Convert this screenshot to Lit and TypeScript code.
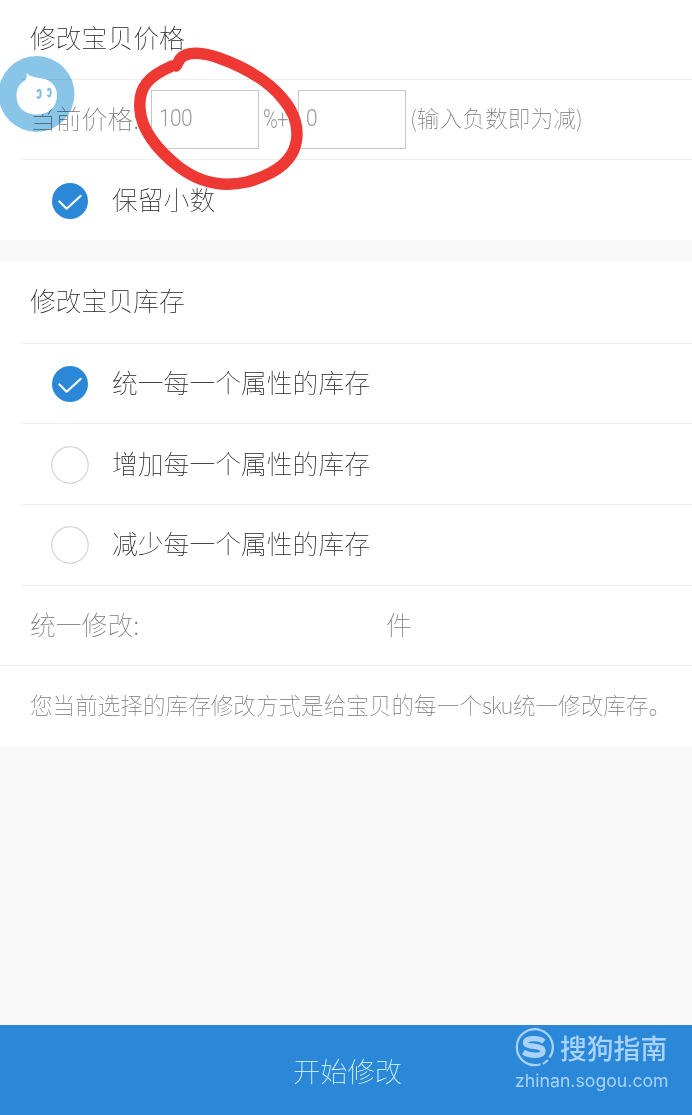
import { LitElement, html, css, svg } from "lit";
import { customElement, property } from "lit/decorators.js";
import { classMap } from "lit/directives/class-map.js";

@customElement("check-dot")
class CheckDot extends LitElement {
  @property({ type: Boolean }) checked = false;
  static styles = css`
    :host { display: block; width: 38px; height: 38px; }
    svg { display: block; }
  `;
  render() {
    return html`<svg width="38" height="38" viewBox="0 0 38 38" fill="none">
      ${this.checked
        ? svg`<circle cx="19" cy="19" r="18" fill="#2b88d8"/><path d="M8.4 19.5L15.6 26.7L29.6 14" stroke="#fff" stroke-width="2.2" stroke-linecap="round" stroke-linejoin="round"/>`
        : svg`<circle cx="19" cy="19" r="18.2" fill="#fff" stroke="#cfcfcf" stroke-width="1.1"/>`}
    </svg>`;
  }
}

@customElement("app-root")
class AppRoot extends LitElement {
  static styles = css`
    :host {
      display: block;
      font-family: "Noto Sans CJK SC", sans-serif;
      font-weight: 100;
    }
    .page {
      position: relative;
      display: flex;
      flex-direction: column;
      box-sizing: border-box;
      height: 1115px;
      overflow: hidden;
      background: #f8f8f8;
      color: #222;
      font-size: 25.8px;
      line-height: 36px;
      white-space: nowrap;
    }
    .card { background: #fff; }
    .stock { margin-top: 22px; }
    .row {
      box-sizing: border-box;
      display: flex;
      align-items: center;
      height: 80.6px;
      margin-left: 22px;
      padding-left: 8px;
      border-bottom: 1px solid #eee;
    }
    .price .row { height: 80px; }
    .row.title { padding-bottom: 5px; }
    .stock .row.title { height: 81.8px; padding-bottom: 5px; }
    .row.last { border-bottom-color: transparent; }
    .row.full { margin-left: 0; padding-left: 30px; }
    .option { padding: 1px 0 0 29px; gap: 23px; }
    .price .option { padding-top: 2px; }
    .option .label { padding-bottom: 4px; }
    .muted { color: #777; }
    .pair { display: grid; grid-template-columns: 356px auto; padding-bottom: 3px; }
    .prices { display: grid; grid-template-columns: 121px 108px 39px 108px auto; }
    .prices .name, .hint { padding-bottom: 4px; }
    .field {
      box-sizing: border-box;
      height: 59px;
      padding-left: 7px;
      border: 1px solid #c8c8c8;
      font: 300 24px/55px Roboto, sans-serif;
      color: #999;
    }
    .digits { display: inline-block; transform-origin: left; transform: scaleX(.87); letter-spacing: -.6px; }
    .op { padding-left: 4px; font: 300 25px/36px Roboto, sans-serif; color: #999; letter-spacing: -1px; }
    .op span { display: inline-block; transform: scaleX(.8); transform-origin: left; }
    .hint { font-size: 22.75px; padding-left: 4px; }
    .desc { font-size: 22.6px; color: #777; padding-bottom: 2px; }
    .sku { letter-spacing: -1.2px; padding-right: .6px; }
    .stop { font-weight: 300; color: #999; }
    .submit {
      display: flex;
      align-items: center;
      justify-content: center;
      box-sizing: border-box;
      height: 90px;
      margin-top: auto;
      padding: 0 0 0 3px;
      background: #2b88d8;
      color: #e2ffff;
      font-size: 27.3px;
    }
    .halo { position: absolute; left: 0; top: 55px; mix-blend-mode: multiply; }
    .drop { position: absolute; left: 0; top: 55px; }
    .scribble { position: absolute; left: 125px; top: 40px; }
    .mark {
      position: absolute;
      left: 515px;
      top: 1027px;
      color: #a9d3fb;
    }
    .brand { display: flex; align-items: center; gap: 6px; height: 42px; font-size: 26.8px; font-weight: 500; }
    .site { font: 400 17.7px/23px Inter, sans-serif; }
  `;

  private options = [
    { label: "统一每一个属性的库存", on: true },
    { label: "增加每一个属性的库存", on: false },
    { label: "减少每一个属性的库存", on: false },
  ];

  private option(label: string, on: boolean, last = false) {
    return html`<div class=${classMap({ row: true, option: true, last })}>
      <check-dot ?checked=${on}></check-dot><span class="label">${label}</span>
    </div>`;
  }

  render() {
    return html`<main class="page">
      <section class="card price">
        <div class="row title">修改宝贝价格</div>
        <div class="row muted prices">
          <span class="name">当前价格:</span>
          <div class="field"><span class="digits">100</span></div>
          <span class="op"><span>%+</span></span>
          <div class="field"><span class="digits">0</span></div>
          <span class="hint">(输入负数即为减)</span>
        </div>
        ${this.option("保留小数", true, true)}
      </section>
      <section class="card stock">
        <div class="row title">修改宝贝库存</div>
        ${this.options.map((o) => this.option(o.label, o.on))}
        <div class="row full muted pair"><span>统一修改:</span><span>件</span></div>
        <div class="row full last desc">您当前选择的库存修改方式是给宝贝的每一个<span class="sku">sku</span>统一修改库存<span class="stop">。</span></div>
      </section>
      <div class="submit">开始修改</div>

      <svg class="halo" width="75" height="78" viewBox="0 0 75 78">
        <circle cx="36.5" cy="39" r="38" fill="#88c5e6"/>
      </svg>
      <svg class="drop" width="75" height="78" viewBox="0 0 75 78">
        <path d="M26.500 18C30 22 37 22.500 45 24C53 27 57 33 57 40C57 52 49 59.500 37 59.500C24 59.500 16.500 52 16.500 41C16.500 33 20 28 25 25.500C27 23 27 21 26.500 18Z" fill="#fff"/>
        <g fill="none" stroke="#79bce1" stroke-width="2" stroke-linecap="round">
          <path d="M37.500 36.500C38 34 41 34.500 40.500 37.500V40C40.500 43 38.500 43.500 37.500 42"/>
          <path d="M48 35C48.500 33 51 33.500 50.500 36.500V39C50.500 42 49 42 48 40.500"/>
        </g>
      </svg>

      <svg class="scribble" width="190" height="160" viewBox="125 40 190 160" fill="none" stroke="#ed3833" stroke-width="11.500" stroke-linecap="round" stroke-linejoin="round">
        <path d="M176 66L180 59C187 50 205 53 219 58C247 68 270 83 283 99C295 113 299 129 296 143C292 163 272 175 247 182C221 188 199 182 179 167C157 150 141 129 140 109C138 87 149 76 172 66"/>
      </svg>

      <div class="mark">
        <div class="brand">
          <svg width="39" height="40" viewBox="0 0 39 40" fill="none" stroke="#a9d3fb">
            <path d="M25.500 36.200A18 18 0 1 1 34.500 29.500M28 36L33 32" stroke-width="2.200"/>
            <path d="M29 13.500C24 9.500 10.500 9.500 10.500 14.500C10.500 20 28 16.500 28 23C28 29 14 28 8.500 24" stroke-width="5.400"/>
          </svg>
          <span>搜狗指南</span>
        </div>
        <div class="site">zhinan.sogou.com</div>
      </div>
    </main>`;
  }
}
